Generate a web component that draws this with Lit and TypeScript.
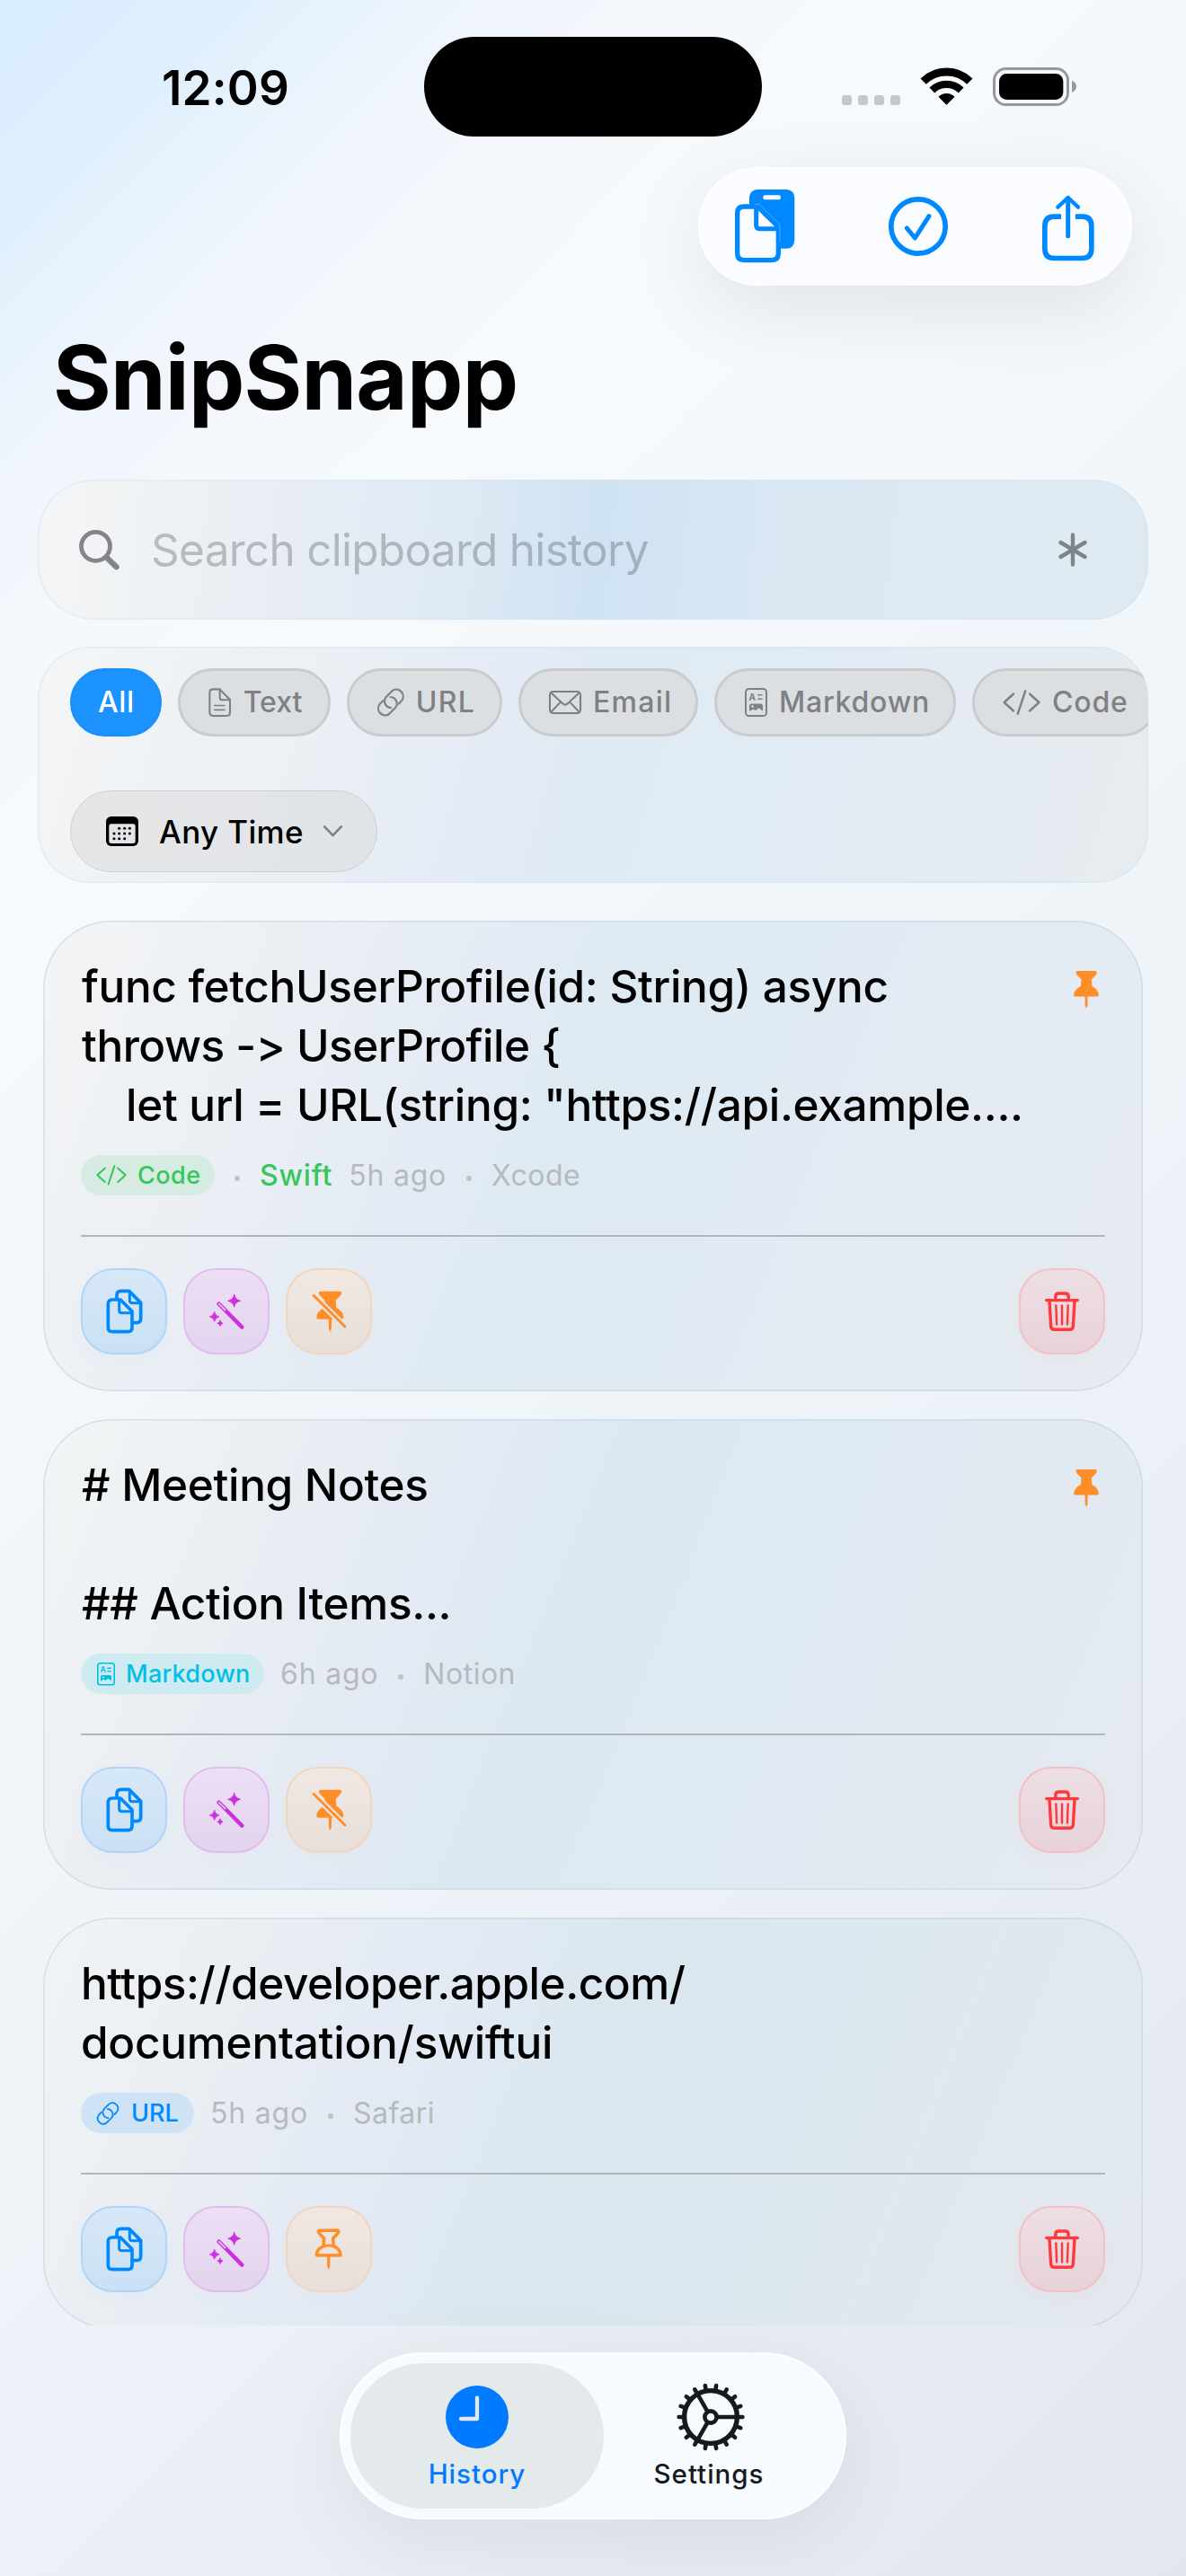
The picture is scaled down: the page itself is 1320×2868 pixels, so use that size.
import { LitElement, html, svg, css, TemplateResult } from "lit";
import { customElement } from "lit/decorators.js";

type Kind = "code" | "markdown" | "url";

interface Clip {
  kind: Kind;
  lines: { text: string; cls: string }[];
  language?: string;
  age: string;
  source: string;
  pinned: boolean;
}

const clips: Clip[] = [
  {
    kind: "code",
    lines: [
      { text: "func fetchUserProfile(id: String) async", cls: "t-func" },
      { text: "throws -> UserProfile {", cls: "t-throws" },
      { text: "let url = URL(string: \"https://api.example....", cls: "t-let" },
    ],
    language: "Swift",
    age: "5h ago",
    source: "Xcode",
    pinned: true,
  },
  {
    kind: "markdown",
    lines: [
      { text: "# Meeting Notes", cls: "t-func" },
      { text: "", cls: "" },
      { text: "## Action Items...", cls: "t-func" },
    ],
    age: "6h ago",
    source: "Notion",
    pinned: true,
  },
  {
    kind: "url",
    lines: [
      { text: "https://developer.apple.com/", cls: "t-link" },
      { text: "documentation/swiftui", cls: "t-doc" },
    ],
    age: "5h ago",
    source: "Safari",
    pinned: false,
  },
];

const codeIcon = html`<svg class="i-code" viewBox="0 0 42 28" fill="none" stroke="currentColor" stroke-width="2.5" stroke-linecap="round" stroke-linejoin="round">
  <path d="M12 4.5 L1.6 14 L12 23.5 M25.2 1.4 L16.8 26.6 M30 4.5 L40.4 14 L30 23.5" />
</svg>`;

const linkIcon = html`<svg class="i-link" viewBox="1046 109 95 96" fill="none" stroke="currentColor" stroke-width="6.500" stroke-linecap="round">
  <path d="M1120 162 L1131 150 A23 23 0 0 0 1099 118 L1079 138 A22 22 0 0 0 1094.5 175" />
  <path d="M1067 152 L1056 164 A23 23 0 0 0 1088 196 L1108 176 A22 22 0 0 0 1092.500 139" />
</svg>`;

const richIcon = html`<svg class="i-rich" viewBox="0 0 25 32" fill="none" stroke="currentColor" stroke-width="2" stroke-linecap="round">
  <rect x="1" y="1" width="23" height="30" rx="3.6" />
  <path d="M14.800 7.800 H19 M14.800 12.200 H19" stroke-width="1.600" />
  <text x="4.300" y="13.700" class="glyph" fill="currentColor" stroke="none">A</text>
  <path d="M5 20 Q5 17.400 7 17.400 H18 Q20 17.400 20 20 V25.600 L15.300 22.200 L12.200 25 L9.600 23.400 L5 25.800 Z" fill="currentColor" stroke="none" />
  <circle cx="8.600" cy="20.600" r="1.300" class="hole" stroke="none" />
</svg>`;

const docIcon = html`<svg class="i-doc" viewBox="485 108 77 97" fill="none" stroke="currentColor" stroke-width="6.300" stroke-linecap="round" stroke-linejoin="round">
  <path d="M501 112 H522 L557 147 V189 Q557 201 545 201 H501 Q489 201 489 189 V124 Q489 112 501 112 Z" />
  <path d="M523 113 V140 Q523 148 531 148 H556" />
  <path d="M505 166.500 H539 M505 181 H539" stroke-width="5" />
</svg>`;

const mailIcon = html`<svg class="i-mail" viewBox="0 0 36 26" fill="none" stroke="currentColor" stroke-width="2.100" stroke-linecap="round" stroke-linejoin="round">
  <rect x="1" y="1" width="34" height="24" rx="3.600" />
  <path d="M2.300 2.200 L15.400 14.400 Q18 16.700 20.600 14.400 L33.700 2.200 M2.300 23.800 L12.800 12.600 M33.700 23.800 L23.200 12.600" />
</svg>`;

const copyIcon = html`<svg class="i-copy" viewBox="112 167 123 150" fill="none" stroke="currentColor" stroke-width="11" stroke-linecap="round" stroke-linejoin="round">
  <path d="M133 203 H160 L199 242 V296 Q199 310 185 310 H133 Q119 310 119 296 V217 Q119 203 133 203 Z" />
  <path d="M156 205 V238 Q156 247 165 247 H198" stroke-width="9" />
  <path d="M148 198 V188 Q148 174 162 174 H189 L228 213 V266 Q228 280 214 280 H205" />
  <path d="M191 176 V206 Q191 214 200 214 H227" stroke-width="9" />
</svg>`;

const star = (x: number, y: number, r: number) => {
  const k = r * 0.17;
  return svg`<path d="M${x} ${y - r} Q${x + k} ${y - k} ${x + r} ${y} Q${x + k} ${y + k} ${x} ${y + r} Q${x - k} ${y + k} ${x - r} ${y} Q${x - k} ${y - k} ${x} ${y - r} Z" fill="currentColor" stroke="currentColor" stroke-width="2.500" stroke-linejoin="round" />`;
};

const wandIcon = html`<svg class="i-wand" viewBox="455 181 117 121" fill="none" stroke-linecap="round">
  <path d="M487 216 L564 294" stroke="currentColor" stroke-width="13" />
  <path d="M487 216 L508 237" class="wand-tip" stroke-width="4.500" />
  ${star(538, 206, 21)}${star(472, 259, 16)}${star(491, 281, 9.5)}
</svg>`;

const pinShape =
  "M824 173 H889 Q895 173 894.500 180 Q893 187 875 203 L877 228 Q901 240 901 261 Q901 266 896 266 H861 V292 Q861 299 857 308 H855.500 Q851.500 299 851.500 292 V266 H816 Q811 266 811 261 Q811 240 836 228 L838 203 Q820 187 818.500 180 Q818 173 824 173 Z";

const pinIcon = html`<svg class="i-pin" viewBox="811 173 90 135" fill="currentColor"><path d=${pinShape} /></svg>`;

const pinSlashIcon = html`<svg class="i-pin-slash" viewBox="795 171 117 139">
  <defs>
    <mask id="cut" maskUnits="userSpaceOnUse" x="795" y="171" width="117" height="139">
      <rect x="795" y="171" width="117" height="139" fill="#fff" />
      <path d="M790 176 L917 302" stroke="#000" stroke-width="21" />
    </mask>
  </defs>
  <path d=${pinShape} fill="currentColor" mask="url(#cut)" />
  <path d="M801 187 L906 291" stroke="currentColor" stroke-width="8.500" stroke-linecap="round" />
</svg>`;

const pinOutlineIcon = html`<svg class="i-pin-outline" viewBox="809 171 94 139" fill="none" stroke="currentColor" stroke-width="10.500" stroke-linejoin="round">
  <path d="M826 178 H886 Q891 178 889 184 Q886 190 871 204 L873 231 Q896 240 896 261 H816 Q816 240 839 231 L841 204 Q826 190 823 184 Q821 178 826 178 Z" />
  <path d="M838 231 Q856 225 874 231" stroke-width="9" />
  <path d="M851.500 262 H861 V292 Q861 299 857 308 H855.500 Q851.500 299 851.500 292 Z" fill="currentColor" stroke="none" />
</svg>`;

const trashIcon = html`<svg class="i-trash" viewBox="0 0 38 44" fill="none" stroke="currentColor" stroke-width="3.400" stroke-linecap="round" stroke-linejoin="round">
  <path d="M1.700 9.600 H36.300" />
  <path d="M11.800 9 V5.600 Q11.800 2 15.400 2 H22.600 Q26.200 2 26.200 5.600 V9" />
  <path d="M5 10 L6.600 38.600 Q6.900 42.300 10.600 42.300 H27.400 Q31.100 42.300 31.400 38.600 L33 10" />
  <path d="M12.300 15.500 L13.100 36.500 M19 15.500 V36.500 M25.700 15.500 L24.900 36.500" stroke-width="2.400" />
</svg>`;

const teeth = Array.from({ length: 18 }, (_, i) => {
  const a = (i * Math.PI) / 9;
  const c = Math.cos(a);
  const s = Math.sin(a);
  return svg`<path d="M${38 + c * 31} ${38 + s * 31} L${38 + c * 35.4} ${38 + s * 35.4}" />`;
});

const gearIcon = html`<svg class="i-gear" viewBox="0 0 76 76" fill="none" stroke="currentColor" stroke-width="4.600" stroke-linecap="round">
  <circle cx="38" cy="38" r="29.400" stroke-width="5.400" />
  <circle cx="38" cy="38" r="6.600" stroke-width="4.600" />
  <path d="M46 38 H66 M34 31.100 L24 13.700 M34 44.900 L24 62.300" stroke-linecap="butt" />
  ${teeth}
</svg>`;

const kinds: Record<Kind, { label: string; icon: TemplateResult }> = {
  code: { label: "Code", icon: codeIcon },
  markdown: { label: "Markdown", icon: richIcon },
  url: { label: "URL", icon: linkIcon },
};

@customElement("app-root")
export class AppRoot extends LitElement {
  static styles = css`
    :host {
      display: block;
    }
    * {
      box-sizing: border-box;
    }
    svg {
      display: block;
      flex: none;
      overflow: visible;
    }
    .screen {
      width: 1320px;
      height: 2868px;
      overflow: hidden;
      display: flex;
      flex-direction: column;
      font-family: Inter, "Liberation Sans", sans-serif;
      font-variant-ligatures: none;
      color: #000;
      white-space: nowrap;
      background: linear-gradient(135deg, #d9edfe 0%, #dfeffd 6%, #e8f3fc 9.500%, #f0f5fd 13%, #f5f8fc 18%, #f6fafc 24%, #f4f8fc 36%, #f0f5f9 50%, #edf2f8 64%, #e8edf5 80%, #e2e7ef 100%);
    }

    .status {
      display: grid;
      grid-template-columns: 472px 376px 472px;
      align-items: center;
      height: 111px;
      margin-top: 41px;
      flex: none;
    }
    .clock {
      padding-left: 180px;
      font-size: 53px;
      font-weight: 600;
      line-height: 60px;
      letter-spacing: 0.17px;
      padding-top: 2px;
    }
    .island {
      height: 111px;
      border-radius: 56px;
      background: #000;
    }
    .signals {
      width: 262px;
      height: 43px;
      margin-left: 89px;
    }

    .actions {
      display: flex;
      justify-content: space-between;
      align-items: center;
      align-self: flex-end;
      flex: none;
      width: 483px;
      height: 132px;
      margin: 34px 60px 0 0;
      padding: 0 42px 0 41px;
      border-radius: 66px;
      color: #0088ff;
      background: #fbfcff;
      box-shadow: inset 0 0 0 2px #fefeff, 0 24px 90px rgba(0, 0, 0, 0.09);
    }
    .i-paste { width: 66.300px; height: 81.700px; }
    .i-check { width: 66px; height: 66px; }
    .i-share { width: 57.700px; height: 72.300px; margin-top: 4px; }

    h1 {
      flex: none;
      margin: 52px 0 0 59px;
      font-size: 99px;
      line-height: 100px;
      font-weight: 700;
      letter-spacing: -0.800px;
    }

    .search {
      display: flex;
      align-items: center;
      flex: none;
      height: 156px;
      margin: 64px 42px 0;
      padding: 0 68px 0 46px;
      border-radius: 62px;
      color: #7f838b;
      background: linear-gradient(96deg, #f4f5f6 0%, #eff2f4 10%, #e8edf5 23%, #dfeaf4 37%, #d0e3f3 50%, #d3e5f3 57%, #dae8f3 68%, #dfebf3 90%, #dee8f0 100%);
      box-shadow: inset 0 0 0 1.500px rgba(205, 229, 248, 0.5);
    }
    .placeholder {
      flex: 1;
      margin-left: 35px;
      font-size: 49.500px;
      line-height: 60px;
      letter-spacing: -0.72px;
      color: rgba(60, 60, 67, 0.3);
    }
    .i-glass { width: 45px; height: 45px; color: #848589; }
    .i-star { width: 32px; height: 38px; }

    .filters {
      flex: none;
      height: 263px;
      margin: 30px 42px 0;
      padding: 24px 0 0 36px;
      border-radius: 58px;
      overflow: hidden;
      background: linear-gradient(106deg, #f4f5f5 0%, #eff2f5 13%, #ebf0f5 25%, #e6ecf5 37%, #e0eaf3 49%, #e1ebf3 65%, #e4ebf3 82%, #e6ecef 97%);
      box-shadow: inset 0 0 0 1.500px rgba(205, 229, 248, 0.5);
    }
    .chips {
      display: flex;
      gap: 18px;
      height: 76px;
    }
    .chip {
      display: flex;
      align-items: center;
      gap: 13px;
      flex: none;
      height: 76px;
      padding-left: 31px;
      border: 3px solid #c9cbcf;
      border-radius: 38px;
      color: #7f8084;
      background: #dcdfe2;
      font-size: 32px;
      font-weight: 500;
      line-height: 40px;
    }
    .chip-all {
      width: 102px;
      padding-left: 28px;
      color: #fff;
      background: #1c93ff;
      border-color: #1a90fd;
      letter-spacing: 0.63px;
    }
    .chip-text { width: 170px; }
    .chip-url { width: 173px; gap: 12px; padding-left: 30px; letter-spacing: 1.290px; }
    .chip-email { width: 200px; letter-spacing: 1.260px; }
    .chip-markdown { width: 269px; letter-spacing: 0.780px; }
    .chip-code { width: 206px; letter-spacing: 0.810px; }
    .i-doc { width: 25.700px; height: 32.300px; }
    .i-link { width: 31.700px; height: 32px; }
    .i-mail { width: 36px; height: 26px; }
    .i-rich { width: 25px; height: 32px; }
    .i-code { width: 42px; height: 28px; }
    .glyph { font: 700 10.500px Inter, sans-serif; }
    .hole { fill: #dcdfe2; }
    .when {
      display: flex;
      align-items: center;
      width: 342px;
      height: 91px;
      margin-top: 60px;
      padding-left: 39px;
      border: 1.500px solid #cdd0d3;
      border-radius: 46px;
      background: linear-gradient(100deg, #e6e6e8, #e0e4e7);
      font-size: 35px;
      font-weight: 500;
      line-height: 44px;
      letter-spacing: 0.35px;
    }
    .when span { margin: 0 22px 0 23px; }
    .i-cal { width: 36px; height: 33px; }
    .i-down { width: 21px; height: 12.500px; color: #7f8084; }

    .list {
      display: flex;
      flex-direction: column;
      gap: 31px;
      flex: none;
      height: 1564px;
      margin-top: 42px;
      padding: 0 48px;
      overflow: hidden;
    }
    .card {
      display: flex;
      flex-direction: column;
      flex: none;
      padding: 40px 42px 41px;
      border-radius: 76px;
      background: linear-gradient(112deg, #f3f4f5 0%, #eef1f4 13%, #e9eef5 26%, #e4ebf4 36%, #deeaf2 47%, #e0eaf3 60%, #e4ebf2 80%, #e6ebf1 100%);
      box-shadow: inset 0 0 0 1.500px rgba(190, 208, 224, 0.55);
    }
    .card.markdown {
      background: linear-gradient(112deg, #f2f4f5 0%, #edf1f3 13%, #e7ecf4 26%, #e2eaf3 36%, #dce8f1 47%, #dee9f2 60%, #e2e9f1 80%, #e5eaf0 100%);
    }
    .card.url {
      background: linear-gradient(112deg, #f1f3f5 0%, #ebeff3 15%, #e5ebf4 28%, #e0e9f3 38%, #dae7ef 48%, #dce8f0 60%, #e0e8ef 80%, #e3e9ee 100%);
    }
    .head {
      display: flex;
      justify-content: space-between;
      padding-right: 7px;
      color: #ff8d28;
    }
    .title {
      margin-left: 1px;
      font-size: 49.500px;
      font-weight: 500;
      line-height: 66px;
      color: #000;
    }
    .line { height: 66px; }
    .t-func { letter-spacing: -0.33px; }
    .t-throws { letter-spacing: -0.5px; }
    .t-let { letter-spacing: -0.33px; padding-left: 49px; }
    .t-link { letter-spacing: -0.48px; margin-left: -1px; }
    .t-doc { letter-spacing: -0.25px; margin-left: -1px; }
    .i-pin { width: 28px; height: 41.500px; margin-top: 16px; }

    .meta {
      display: flex;
      align-items: center;
      gap: 18px;
      height: 45px;
      margin-top: 23px;
      font-size: 32px;
      line-height: 45px;
      color: #b6b9c0;
    }
    .badge {
      display: flex;
      align-items: center;
      height: 45px;
      padding-left: 17px;
      border-radius: 23px;
      font-size: 27px;
      font-weight: 550;
    }
    .badge.code { width: 149px; gap: 12px; color: #34c759; background: #d6ece2; letter-spacing: 0.5px; }
    .badge.markdown { width: 204px; gap: 12px; padding-left: 18px; color: #00c0e8; background: #cfebf2; letter-spacing: 0.25px; }
    .badge.url { width: 126px; gap: 13px; color: #0088ff; background: #cfe3f6; }
    .badge .i-code { width: 34px; height: 22.600px; }
    .badge .i-rich { width: 20px; height: 25.600px; }
    .badge .i-link { width: 26px; height: 26px; }
    .badge .hole { fill: #cfebf2; }
    .lang { color: #34c759; font-weight: 550; letter-spacing: 0.8px; }
    .age { letter-spacing: 0.8px; }
    .source { letter-spacing: 0.5px; }
    .dot {
      width: 6px;
      height: 6px;
      margin: 7px 4px 0;
      border-radius: 3px;
      background: #c0c3ca;
    }

    .rule {
      height: 1.500px;
      margin: 44px 0 35.500px;
      background: #b1b6be;
    }
    .buttons {
      display: flex;
      gap: 18px;
    }
    .button {
      display: grid;
      place-items: center;
      width: 96px;
      height: 96px;
      border-radius: 36px;
      border: 2px solid;
    }
    .button.copy {
      color: #0088ff;
      border-color: #b0d5f9;
      background: linear-gradient(#d7e8f7, #cbe0f5);
      box-shadow: 0 6px 20px rgba(0, 136, 255, 0.03);
    }
    .button.magic {
      color: #cb30e0;
      border-color: #e1bdef;
      background: linear-gradient(#ecdff4, #e3d4ef);
      box-shadow: 0 6px 20px rgba(203, 48, 224, 0.02);
    }
    .button.pin {
      color: #ff8d28;
      border-color: #f2d5be;
      background: linear-gradient(#f1e8e2, #e6dfda);
      box-shadow: 0 6px 20px rgba(255, 141, 40, 0.02);
    }
    .button.trash {
      margin-left: auto;
      color: #ff383c;
      border-color: #f3c0c6;
      background: linear-gradient(#eddfe4, #e8d2d9);
      box-shadow: 0 6px 20px rgba(255, 56, 60, 0.03);
    }
    .wand-tip { stroke: #e8d9f1; }
    .i-copy { width: 41px; height: 50px; }
    .i-wand { width: 39px; height: 40.300px; }
    .i-pin-slash { width: 39px; height: 46.300px; }
    .i-pin-outline { width: 31.300px; height: 46.300px; }
    .i-trash { width: 38px; height: 44px; }

    .tabs {
      display: flex;
      align-self: center;
      flex: none;
      width: 564px;
      height: 186px;
      margin-top: 30px;
      padding: 12px;
      border-radius: 93px;
      background: #f7fbff;
      box-shadow: inset 0 0 0 2px #fdfeff, 0 20px 90px rgba(0, 0, 0, 0.07);
    }
    .tab {
      display: flex;
      flex-direction: column;
      align-items: center;
      width: 282px;
      height: 162px;
      border-radius: 81px;
      font-size: 29.500px;
      line-height: 36px;
      color: #16191e;
      font-weight: 500;
      letter-spacing: 0.980px;
    }
    .tab.settings { margin-left: -24px; }
    .tab.on {
      color: #007aff;
      background: #e4e9ec;
      font-weight: 550;
      letter-spacing: 1px;
    }
    .tab svg { margin-bottom: 10px; }
    .i-clock { width: 70px; height: 70px; margin-top: 25px; }
    .i-gear { width: 76px; height: 76px; margin-top: 22px; }
    .tab.settings .i-gear { margin-bottom: 7px; margin-left: 4px; }
    .tick { stroke: #e4e9ec; }
  `;

  private card(c: Clip) {
    const k = kinds[c.kind];
    return html`<article class="card ${c.kind}">
      <div class="head">
        <div class="title">${c.lines.map((l) => html`<div class="line ${l.cls}">${l.text}</div>`)}</div>
        ${c.pinned ? pinIcon : null}
      </div>
      <div class="meta">
        <div class="badge ${c.kind}">${k.icon}<span>${k.label}</span></div>
        ${c.language ? html`<i class="dot"></i><span class="lang">${c.language}</span>` : null}
        <span class="age">${c.age}</span><i class="dot"></i><span class="source">${c.source}</span>
      </div>
      <div class="rule"></div>
      <div class="buttons">
        <div class="button copy">${copyIcon}</div>
        <div class="button magic">${wandIcon}</div>
        <div class="button pin">${c.pinned ? pinSlashIcon : pinOutlineIcon}</div>
        <div class="button trash">${trashIcon}</div>
      </div>
    </article>`;
  }

  render() {
    return html`<div class="screen">
      <div class="status">
        <div class="clock">12:09</div>
        <div class="island"></div>
        <svg class="signals" viewBox="51 75 786 129" fill="none">
          <g fill="#c5c7ca">
            <rect x="51" y="168" width="33" height="33" rx="10" />
            <rect x="105" y="168" width="33" height="33" rx="10" />
            <rect x="159" y="168" width="33" height="33" rx="10" />
            <rect x="213" y="168" width="33" height="33" rx="10" />
          </g>
          <path d="M323 122 A110 110 0 0 1 478 122" stroke="#000" stroke-width="27" />
          <path d="M352 151.500 A69 69 0 0 1 449 151.500" stroke="#000" stroke-width="25" />
          <path d="M400.500 199 L375 173 A38 38 0 0 1 426 173 Z" fill="#000" stroke="#000" stroke-width="3" stroke-linejoin="round" />
          <rect x="559.500" y="79.500" width="246" height="120" rx="39" stroke="#97989b" stroke-width="9" />
          <rect x="576" y="96" width="214" height="87" rx="25" fill="#000" />
          <path d="M819 119 Q834 125 834 139 Q834 153 819 159 Z" fill="#97989b" />
        </svg>
      </div>

      <div class="actions">
        <svg class="i-paste" viewBox="174 125 199 245" fill="none" stroke="currentColor" stroke-width="16" stroke-linejoin="round">
          <rect x="222" y="125" width="151" height="197" rx="26" fill="currentColor" stroke="none" />
          <rect x="268" y="144" width="59" height="15" rx="7" fill="#fbfcff" stroke="none" />
          <path d="M204 182 H250 L319 250 V339 Q319 361 297 361 H204 Q182 361 182 339 V204 Q182 182 204 182 Z" fill="#fbfcff" />
          <path d="M245 186 V244 Q245 256 257 256 H316" stroke-width="15" />
          <path d="M240 174.500 H255 L324 242 V300" stroke="#9fd0ff" stroke-width="1.500" />
        </svg>
        <svg class="i-check" viewBox="690 147 198 198" fill="none" stroke="currentColor" stroke-linecap="round" stroke-linejoin="round">
          <circle cx="789" cy="246" r="90.500" stroke-width="17" />
          <path d="M751 252 L778 285 L825 212" stroke-width="15" />
        </svg>
        <svg class="i-share" viewBox="1200 146 173 217" fill="none" stroke="currentColor" stroke-width="17" stroke-linejoin="round">
          <path d="M1263 215.500 H1240 Q1208.500 215.500 1208.500 247 V323 Q1208.500 354.500 1240 354.500 H1333 Q1364.500 354.500 1364.500 323 V247 Q1364.500 215.500 1333 215.500 H1311" />
          <path d="M1286 280 V154" stroke-width="15" stroke-linecap="round" />
          <path d="M1252 184 L1286 152 L1320 184" stroke-width="13" stroke-linecap="round" />
        </svg>
      </div>

      <h1>SnipSnapp</h1>

      <div class="search">
        <svg class="i-glass" viewBox="0 0 45 45" fill="none" stroke="currentColor" stroke-linecap="round">
          <circle cx="18.500" cy="18.300" r="16" stroke-width="4.800" />
          <path d="M31 31 L41.500 41.200" stroke-width="6.400" />
        </svg>
        <span class="placeholder">Search clipboard history</span>
        <svg class="i-star" viewBox="0 0 32 38" fill="none" stroke="currentColor" stroke-width="4.400" stroke-linecap="round">
          <path d="M16 2.500 V35.500 M2.500 11 L29.500 27 M29.500 11 L2.500 27" />
        </svg>
      </div>

      <div class="filters">
        <div class="chips">
          <div class="chip chip-all">All</div>
          <div class="chip chip-text">${docIcon}Text</div>
          <div class="chip chip-url">${linkIcon}URL</div>
          <div class="chip chip-email">${mailIcon}Email</div>
          <div class="chip chip-markdown">${richIcon}Markdown</div>
          <div class="chip chip-code">${codeIcon}Code</div>
        </div>
        <div class="when">
          <svg class="i-cal" viewBox="144 537 108 99">
            <rect x="144" y="537" width="108" height="99" rx="17" fill="#000" />
            <rect x="154" y="562" width="88" height="65" rx="8" fill="#e3e4e7" />
            ${[[188, 577], [206, 577], [223, 577], [171, 594], [188, 594], [206, 594], [223, 594], [171, 611], [188, 611], [206, 611]].map(
              ([x, y]) => svg`<circle cx=${x} cy=${y} r="4.600" fill="#000" />`
            )}
          </svg>
          <span>Any Time</span>
          <svg class="i-down" viewBox="867 569 63 37" fill="none" stroke="currentColor" stroke-width="8" stroke-linecap="round" stroke-linejoin="round">
            <path d="M870.500 573 L898.500 602 L926.500 573" />
          </svg>
        </div>
      </div>

      <div class="list">${clips.map((c) => this.card(c))}</div>

      <div class="tabs">
        <div class="tab on">
          <svg class="i-clock" viewBox="0 0 70 70" fill="none">
            <circle cx="35" cy="35" r="35" fill="currentColor" />
            <path d="M35 13.500 V37 H17" class="tick" stroke-width="4.300" stroke-linecap="round" stroke-linejoin="round" />
          </svg>
          History
        </div>
        <div class="tab settings">${gearIcon}Settings</div>
      </div>
    </div>`;
  }
}
